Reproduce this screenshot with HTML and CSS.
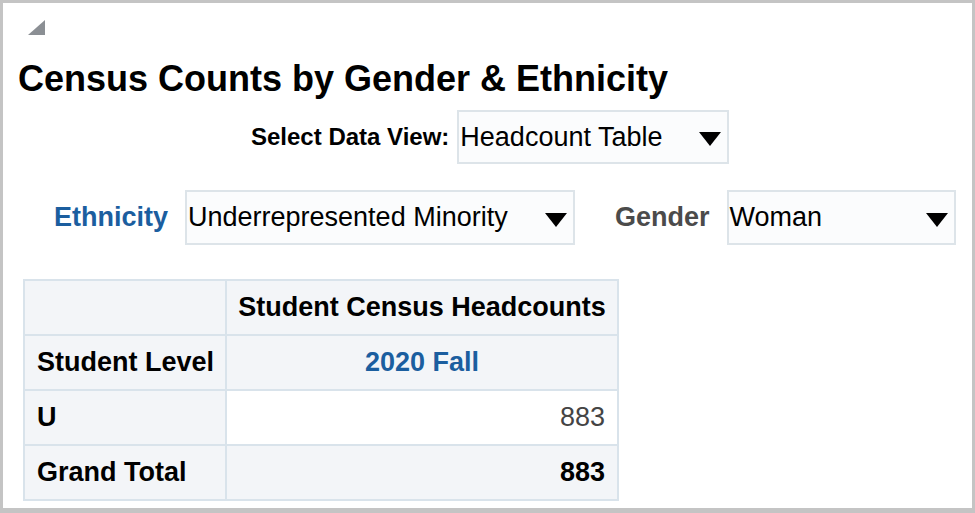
FILE: index.html
```html
<!DOCTYPE html>
<html>
<head>
<meta charset="utf-8">
<link rel="stylesheet" href="styles.css">
</head>
<body>
<div class="frame">
  <div class="collapse-icon">
    <svg width="17" height="15" viewBox="0 0 17 15"><polygon points="17,0 17,15 0,15" fill="#8b8f94"/></svg>
  </div>
  <h1 class="title">Census Counts by Gender &amp; Ethnicity</h1>
  <div class="view-row">
    <span class="view-label">Select Data View:</span>
    <div class="select select-view">
      <span class="select-text">Headcount Table</span>
      <svg class="arrow" width="22" height="15" viewBox="0 0 22 15"><polygon points="0,1 22,1 11,15" fill="#000"/></svg>
    </div>
  </div>
  <div class="prompt-row">
    <span class="prompt-label blue">Ethnicity</span>
    <div class="select select-eth">
      <span class="select-text">Underrepresented Minority</span>
      <svg class="arrow" width="22" height="15" viewBox="0 0 22 15"><polygon points="0,1 22,1 11,15" fill="#000"/></svg>
    </div>
    <span class="prompt-label gray">Gender</span>
    <div class="select select-gen">
      <span class="select-text">Woman</span>
      <svg class="arrow" width="22" height="15" viewBox="0 0 22 15"><polygon points="0,1 22,1 11,15" fill="#000"/></svg>
    </div>
  </div>
  <table class="pivot">
    <colgroup>
      <col class="col1">
      <col class="col2">
    </colgroup>
    <tr>
      <td class="hdr"></td>
      <td class="hdr center tight">Student Census Headcounts</td>
    </tr>
    <tr>
      <td class="hdr">Student Level</td>
      <td class="hdr center blue">2020 Fall</td>
    </tr>
    <tr>
      <td class="hdr">U</td>
      <td class="data num">883</td>
    </tr>
    <tr>
      <td class="hdr">Grand Total</td>
      <td class="hdr num">883</td>
    </tr>
  </table>
</div>
</body>
</html>
```
FILE: styles.css
```css
html, body {
  margin: 0;
  padding: 0;
  background: #ffffff;
}
body {
  font-family: "Liberation Sans", Arial, sans-serif;
  color: #000;
}
.frame {
  width: 975px;
  height: 513px;
  box-sizing: border-box;
  border-top: 3px solid #c4c4c4;
  border-left: 3px solid #c4c4c4;
  border-right: 3px solid #c4c4c4;
  border-bottom: 5px solid #c4c4c4;
  padding-left: 15px;
  display: flex;
  flex-direction: column;
  align-items: flex-start;
  overflow: hidden;
}
.collapse-icon {
  margin-top: 17px;
  margin-left: 10px;
  height: 15px;
  line-height: 0;
}
.title {
  margin: 24px 0 0 0;
  font-size: 36px;
  line-height: 40px;
  font-weight: bold;
}
.view-row {
  margin-top: 11px;
  margin-left: 233px;
  display: flex;
  align-items: center;
  gap: 8px;
}
.view-label {
  font-size: 24px;
  font-weight: bold;
}
.select {
  box-sizing: border-box;
  display: flex;
  align-items: center;
  justify-content: space-between;
  background: #fbfcfd;
  border: 2px solid #dde4e9;
  padding: 0 6px 0 1px;
}
.select-text {
  font-size: 27px;
  color: #000;
  white-space: nowrap;
}
.arrow {
  flex: none;
  margin-top: 3px;
}
.select-view {
  width: 272px;
  height: 54px;
}
.prompt-row {
  margin-top: 26px;
  margin-left: 36px;
  display: flex;
  align-items: center;
}
.prompt-label {
  font-size: 27px;
  font-weight: bold;
  margin-right: 17px;
}
.blue { color: #1b5e9f; }
.gray { color: #4b4b4b; }
.select-eth {
  width: 390px;
  height: 55px;
  margin-right: 40px;
}
.select-gen {
  width: 229px;
  height: 55px;
}
.pivot {
  margin-top: 34px;
  margin-left: 5px;
  border-collapse: collapse;
  table-layout: fixed;
  width: 594px;
  font-size: 27px;
}
.col1 { width: 202px; }
.col2 { width: 392px; }
.pivot td {
  border: 2px solid #d9e3eb;
  height: 53px;
  padding: 0 12px;
  font-weight: bold;
  white-space: nowrap;
}
.pivot td.tight {
  padding: 0 8px;
}
.pivot .hdr {
  background: #f3f5f8;
}
.pivot .data {
  background: #ffffff;
  color: #444;
  font-weight: normal;
}
.center { text-align: center; }
.num { text-align: right; }
.pivot td.blue { color: #1b5e9f; }
```
